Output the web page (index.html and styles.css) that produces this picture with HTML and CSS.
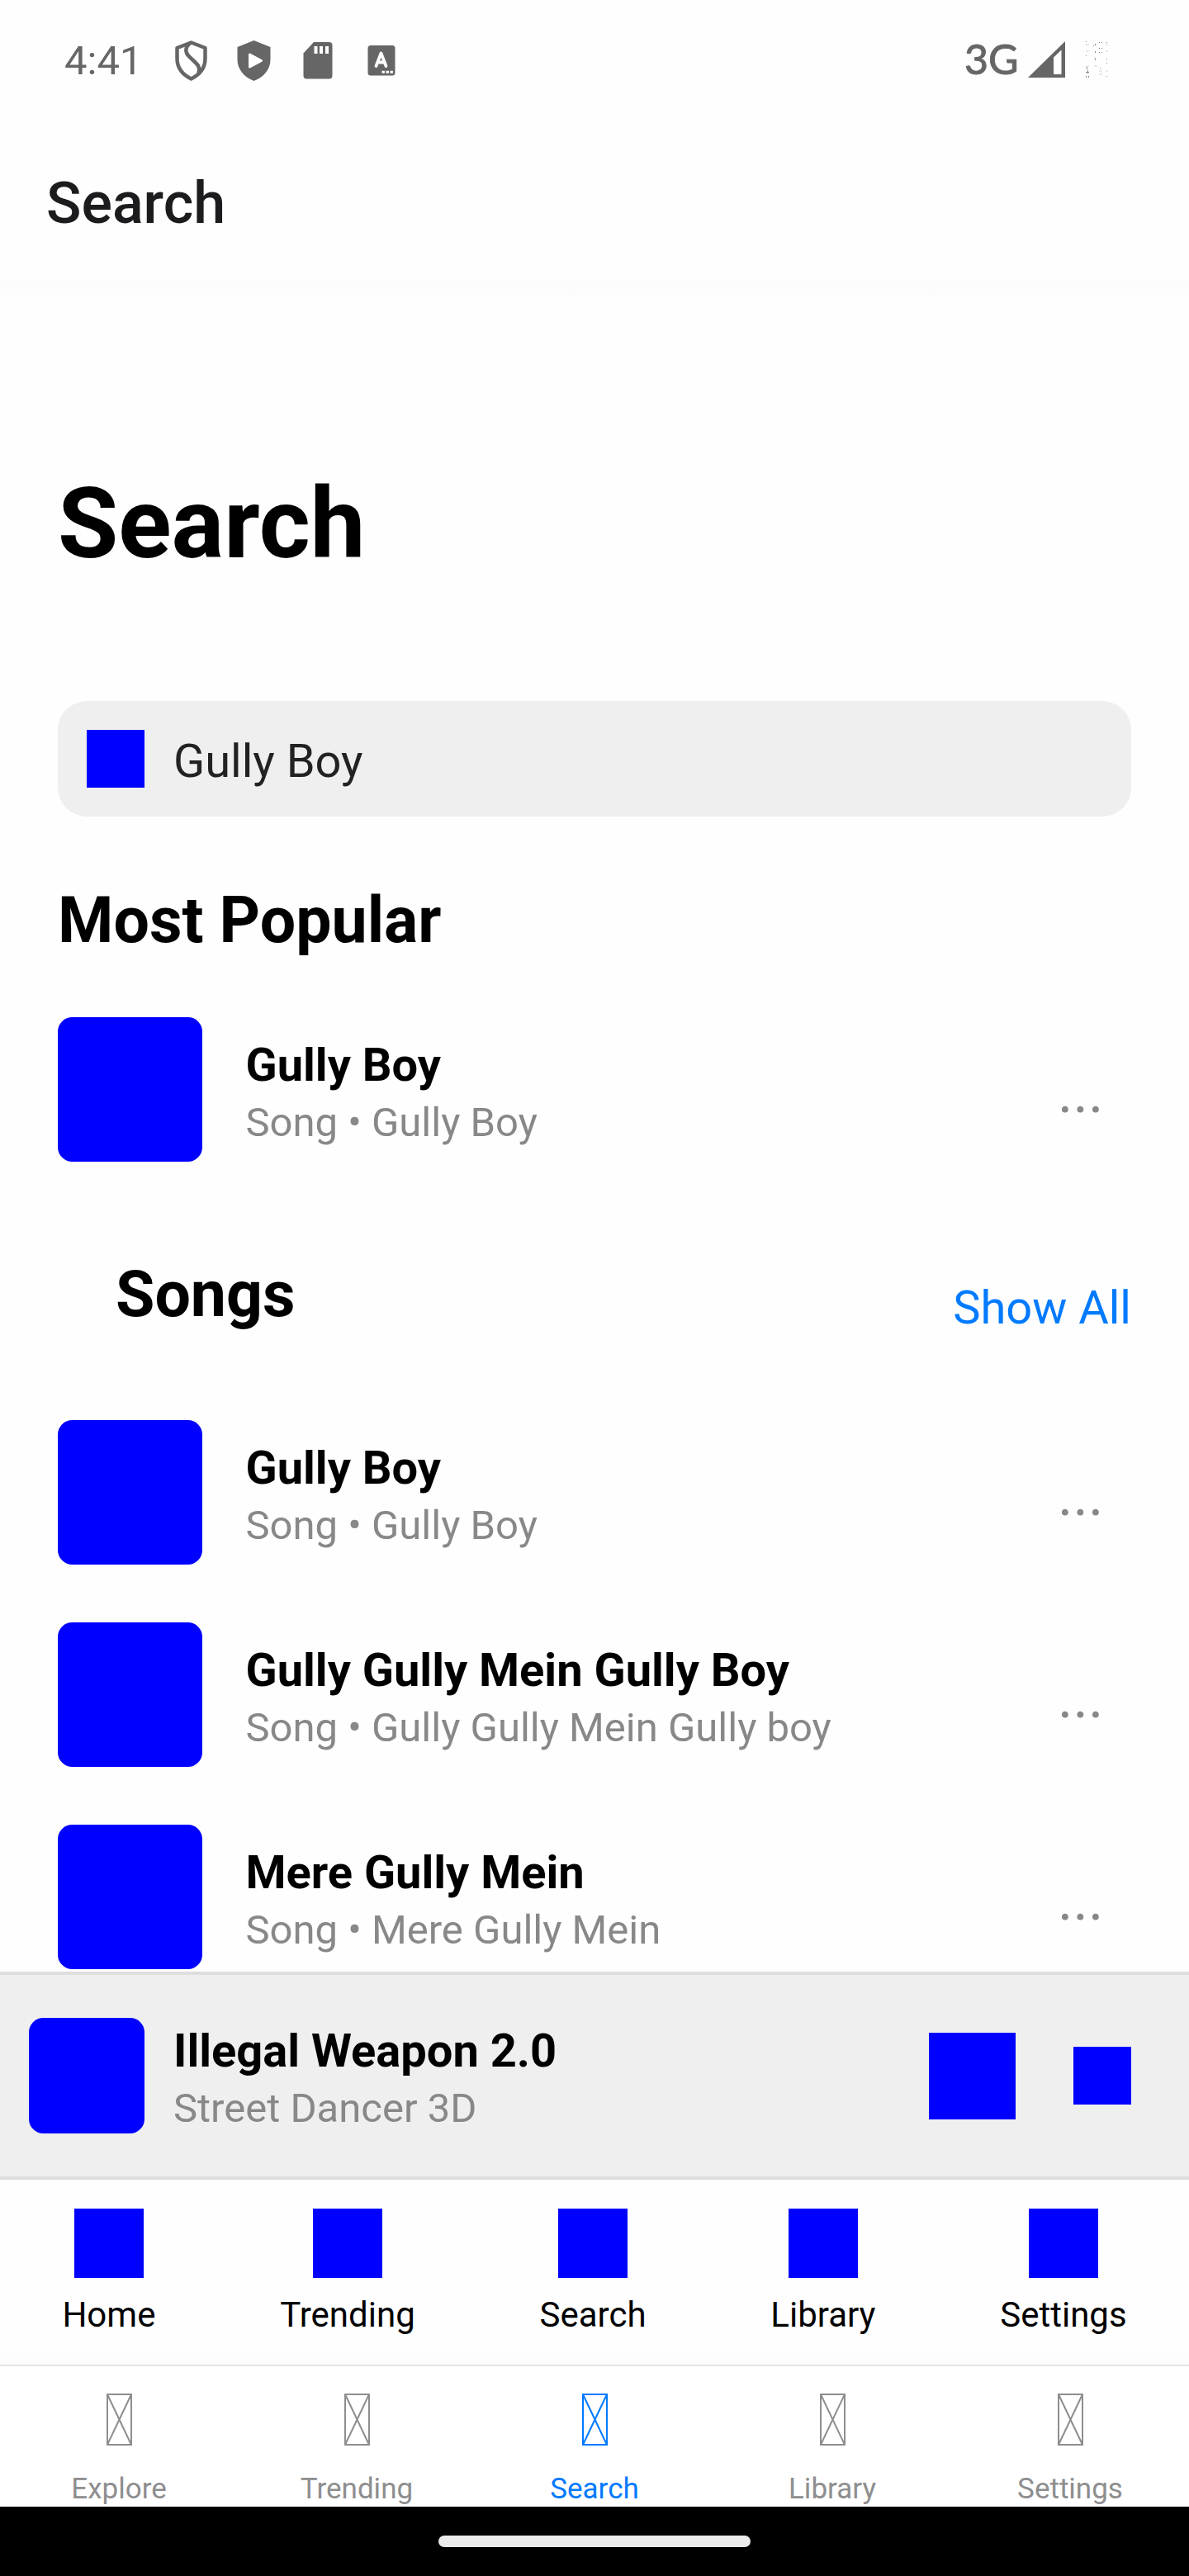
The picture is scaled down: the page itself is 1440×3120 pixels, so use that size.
FILE: index.html
```html
<!DOCTYPE html>
<html lang="en">
<head>
<meta charset="utf-8">
<title>Search</title>
<link rel="stylesheet" href="styles.css">
</head>
<body>
<div class="screen">
  <div class="status">
    <span class="clock">4:41</span>
    <svg class="s-icons" width="268" height="52" viewBox="0 0 268 52" fill="none">
      <path d="M20.5 3.5 37.500 10v13c0 11-7 19.500-17 24.500C10.500 42.500 3.500 34 3.500 23V10z" stroke="#666" stroke-width="4.500" stroke-linejoin="round"/>
      <path d="M19 4.500C13 9 13 15 17.500 20L26 28c4.500 4 5 8 3.500 13" stroke="#666" stroke-width="4.500"/>
      <path d="M96.500 1 116.500 9v15c0 12-8 21.500-20 26-12-4.500-20-14-20-26V9z" fill="#666"/>
      <path d="m91.500 18 14 7.500-14 7.500z" fill="#fff" stroke="#fff" stroke-width="3" stroke-linejoin="round"/>
      <path d="M169 3h18.500a4 4 0 0 1 4 4v36.500a4 4 0 0 1-4 4h-27a4 4 0 0 1-4-4V16.500z" fill="#666"/>
      <path d="M169.500 8h4v9h-4zM176 8h4v9h-4zM183 8h4v9h-4z" fill="#fff"/>
      <rect x="234.500" y="7" width="33" height="36.500" rx="3.500" fill="#666"/>
      <path d="m244.500 32 6-15.500 6 15.500M246.500 27.500h8" stroke="#fff" stroke-width="3.800" stroke-linecap="round" stroke-linejoin="round"/>
      <path d="M251.500 39.300h3.400M256.500 39.300h3.400M261.500 39.300h3.400" stroke="#fff" stroke-width="3"/>
    </svg>
    <span class="net">3G</span>
    <svg class="s-signal" width="100" height="50" viewBox="0 0 100 50">
      <path d="M0 45 45 1v44z" fill="#666"/><path d="M31 20.500 40.500 11.500V41H31z" fill="#fff"/>
      <g stroke="#e8e8e8" stroke-width="2"><path d="M70 5h4M70 13h4M94 5h3M94 13h3M70 31h4M80 31h4M86 37h4M94 37h3M86 41h4M80 21h3"/></g>
      <path d="M70 1h1v1h-1zM81 4h1v2h-1zM86 2h1v1h-1zM89 2h1v1h-1zM95 2h1v1h-1zM81 13h1v2h-1zM86 9h1v1h-1zM89 9h1v1h-1zM86 14h1v1h-1zM89 14h1v1h-1zM79 6h1v1h-1zM81 22h1v2h-1zM95 22h1v1h-1zM70 18h1v1h-1zM95 27h1v1h-1zM71 32h1v3h-1zM72 36h1v4h-1zM70 38h4v1h-4zM70 43h1v2h-1zM73 43h1v2h-1zM87 33h1v1h-1zM95 43h1v1h-1z" fill="#888"/>
    </svg>
  </div>
  <header class="header">Search</header>
  <main class="content">
    <h1 class="title">Search</h1>
    <div class="field"><span class="field-icon"></span><span>Gully Boy</span></div>
    <h2 class="section">Most Popular</h2>
    <div class="row first"><span class="art"></span><div class="meta"><b>Gully Boy</b><small>Song • Gully Boy</small></div><span class="more">...</span></div>
    <div class="section-head"><h2>Songs</h2><a class="show-all">Show All</a></div>
    <div class="list">
      <div class="row"><span class="art"></span><div class="meta"><b>Gully Boy</b><small>Song • Gully Boy</small></div><span class="more">...</span></div>
      <div class="row"><span class="art"></span><div class="meta"><b>Gully Gully Mein Gully Boy</b><small>Song • Gully Gully Mein Gully boy</small></div><span class="more">...</span></div>
      <div class="row"><span class="art"></span><div class="meta"><b>Mere Gully Mein</b><small>Song • Mere Gully Mein</small></div><span class="more">...</span></div>
    </div>
  </main>
  <div class="player">
    <span class="cover"></span>
    <div class="meta"><b>Illegal Weapon 2.0</b><small>Street Dancer 3D</small></div>
    <span class="play"></span><span class="next"></span>
  </div>
  <nav class="menu">
    <div class="menu-item"><i></i>Home</div>
    <div class="menu-item"><i></i>Trending</div>
    <div class="menu-item"><i></i>Search</div>
    <div class="menu-item"><i></i>Library</div>
    <div class="menu-item"><i></i>Settings</div>
  </nav>
  <nav class="tabs">
    <div class="tab"><svg width="31" height="63" viewBox="0 0 31 63"><path d="M1 1h29v61H1zL30 62M30 1 1 62"/></svg>Explore</div>
    <div class="tab"><svg width="31" height="63" viewBox="0 0 31 63"><path d="M1 1h29v61H1zL30 62M30 1 1 62"/></svg>Trending</div>
    <div class="tab active"><svg width="31" height="63" viewBox="0 0 31 63"><path d="M1 1h29v61H1zL30 62M30 1 1 62"/></svg>Search</div>
    <div class="tab"><svg width="31" height="63" viewBox="0 0 31 63"><path d="M1 1h29v61H1zL30 62M30 1 1 62"/></svg>Library</div>
    <div class="tab"><svg width="31" height="63" viewBox="0 0 31 63"><path d="M1 1h29v61H1zL30 62M30 1 1 62"/></svg>Settings</div>
  </nav>
  <div class="gesture"><span></span></div>
</div>
</body>
</html>
```
FILE: styles.css
```css
* { box-sizing: border-box; }
body { margin: 0; background: #fefefe; font-family: Roboto, "Liberation Sans", sans-serif; color: #000; }
h1, h2 { margin: 0; font-weight: 700; }
.screen { width: 1440px; height: 3120px; display: flex; flex-direction: column; overflow: hidden; }

.status { height: 144px; flex: none; display: flex; align-items: flex-start; padding: 45px 0 0 78px; color: #666; font-size: 49px; line-height: 58px; }
.clock { width: 133px; }
.s-icons { margin-top: 3px; }
.net { margin: -3px 0 0 689px; width: 77px; font-family: Lato, Roboto, sans-serif; font-size: 50px; font-weight: 400; -webkit-text-stroke: 1px #666; white-space: nowrap; }
.s-signal { margin-top: 4px; }

.header { height: 196px; flex: none; padding: 61px 0 0 56px; font-size: 70px; line-height: 82px; font-weight: 500; color: #1c1c1e; background: #fefefe; }

.content { height: 2048px; flex: none; padding: 225px 70px 0; background: linear-gradient(#fbfbfb, #fcfcfc 12px, #fefefe 24px); }
.title { font-size: 119px; line-height: 140px; }
.field { margin-top: 144px; height: 140px; border-radius: 35px; background: #efefef; display: flex; align-items: center; gap: 35px; padding: 6px 35px 0; font-size: 56px; color: #222; }
.field-icon { width: 70px; height: 70px; background: #00f; margin-top: -6px; }
.section { margin-top: 81px; font-size: 77px; line-height: 90px; }
.row { display: flex; height: 175px; }
.first { margin-top: 72px; }
.art { width: 175px; height: 175px; border-radius: 17.5px; background: #00f; }
.meta { flex: 1; padding: 25px 0 0 52.5px; display: flex; flex-direction: column; }
.meta b { font-size: 56px; line-height: 66px; font-weight: 700; }
.meta small { font-size: 49px; line-height: 58px; margin-top: 8px; color: #888; }
.more { width: 89px; padding-top: 50px; font-size: 70px; line-height: 82px; color: #888; }
.section-head { display: flex; justify-content: space-between; align-items: flex-start; padding-left: 70px; margin-top: 114px; height: 199px; }
.section-head h2 { font-size: 77px; line-height: 90px; padding-top: 2px; }
.show-all { font-size: 56px; line-height: 66px; padding-top: 30px; color: #007aff; }
.list { display: flex; flex-direction: column; gap: 70px; }

.player { height: 252px; flex: none; display: flex; align-items: center; padding: 0 70px 0 35px; background: #efefef; border: solid #dedede; border-width: 4px 0; }
.cover { width: 140px; height: 140px; border-radius: 17.5px; background: #00f; }
.player .meta { padding: 6px 0 0 35px; }
.play { width: 105px; height: 105px; margin-right: 70px; background: #00f; }
.next { width: 70px; height: 70px; background: #00f; }

.menu { height: 224px; flex: none; display: flex; justify-content: space-around; padding-top: 35px; background: linear-gradient(#fefefe 205px, #fbfbfb); }
.menu-item { display: flex; flex-direction: column; align-items: center; font-size: 42px; line-height: 50px; }
.menu-item i { width: 84px; height: 84px; margin-bottom: 20px; background: #00f; }

.tabs { height: 172px; flex: none; display: flex; border-top: 2px solid #e6e6e6; background: #fff; }
.tab { flex: 1; display: flex; flex-direction: column; align-items: center; padding-top: 33px; font-size: 35px; line-height: 42px; color: #8e8e8f; }
.tab svg { margin-bottom: 32px; fill: none; stroke: currentColor; stroke-width: 2; }
.tab.active { color: #007aff; }

.gesture { height: 84px; flex: none; background: #000; display: flex; justify-content: center; padding-top: 35px; }
.gesture span { width: 378px; height: 14px; border-radius: 7px; background: #ebebeb; }
```
